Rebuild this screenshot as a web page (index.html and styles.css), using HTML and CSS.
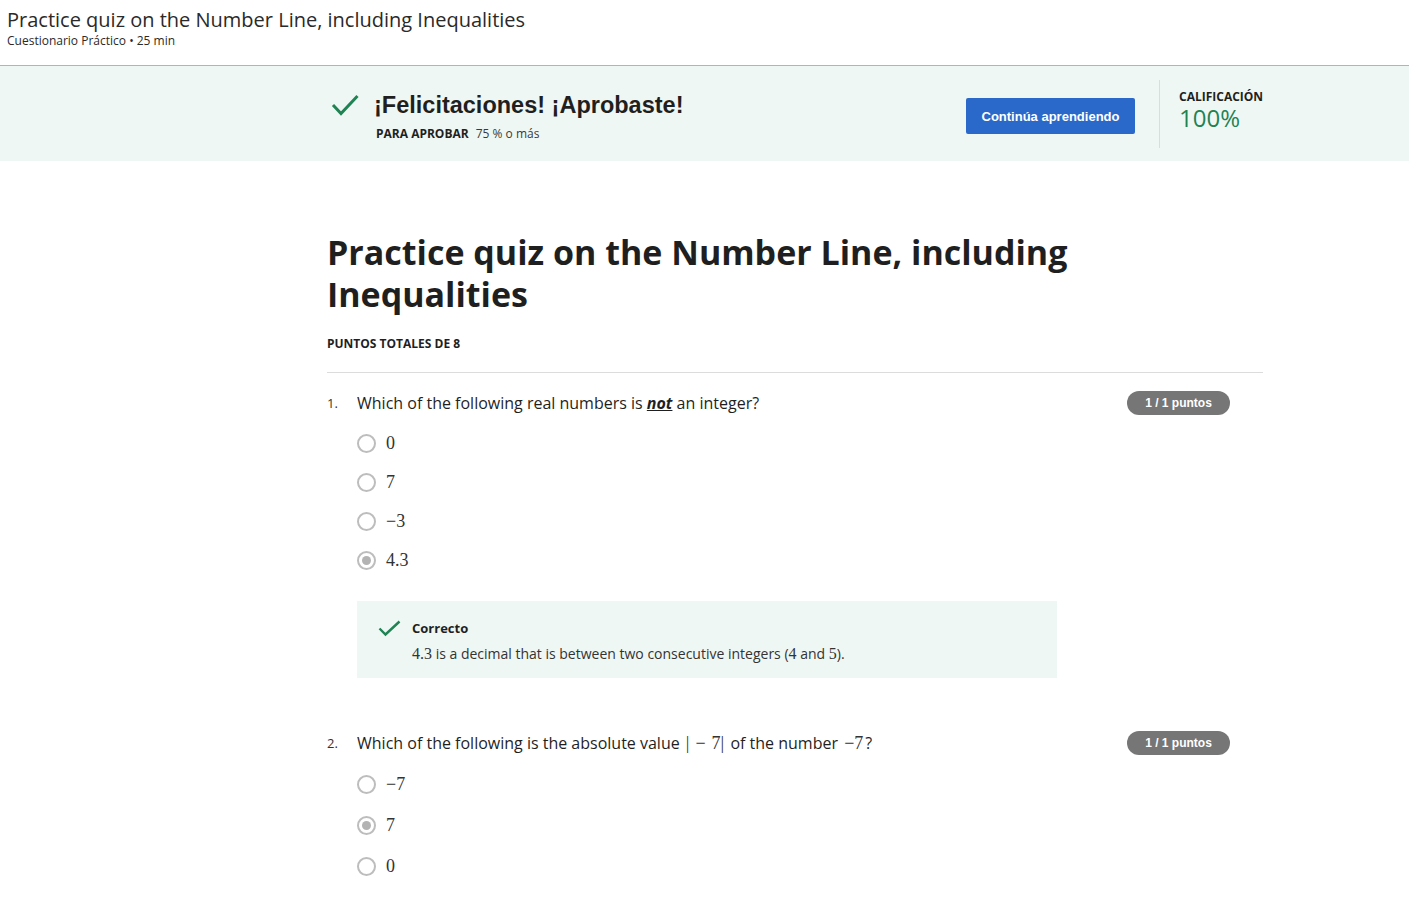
FILE: index.html
```html
<!DOCTYPE html>
<html lang="es">
<head>
<meta charset="utf-8">
<title>Practice quiz on the Number Line, including Inequalities</title>
<link rel="stylesheet" href="styles.css">
</head>
<body>
<header class="top">
  <div class="top-title">Practice quiz on the Number Line, including Inequalities</div>
  <div class="top-sub">Cuestionario Práctico • 25 min</div>
</header>

<section class="banner">
  <div class="banner-inner">
    <div class="pass">
      <svg class="pass-icon" width="28" height="24" viewBox="0 0 28 24" aria-hidden="true">
        <polyline points="2,12 10,20.5 26.5,3" fill="none" stroke="#1f8354" stroke-width="3"/>
      </svg>
      <div class="pass-text">
        <div class="pass-head">¡Felicitaciones! ¡Aprobaste!</div>
        <div class="pass-req"><span class="req-label">PARA APROBAR</span><span class="req-val">75 % o más</span></div>
      </div>
    </div>
    <button class="btn-primary">Continúa aprendiendo</button>
    <div class="vdiv"></div>
    <div class="grade">
      <div class="grade-label">CALIFICACIÓN</div>
      <div class="grade-val">100%</div>
    </div>
  </div>
</section>

<main class="content">
  <h1 class="quiz-title">Practice quiz on the Number Line, including Inequalities</h1>
  <div class="total">PUNTOS TOTALES DE 8</div>
  <hr class="divider">

  <div class="question q1">
    <div class="q-row">
      <div class="q-num">1.</div>
      <div class="q-text">Which of the following real numbers is <span class="emph">not</span> an integer?</div>
      <div class="badge">1 / 1 puntos</div>
    </div>
    <div class="options">
      <div class="opt"><span class="radio"></span><span class="math">0</span></div>
      <div class="opt"><span class="radio"></span><span class="math">7</span></div>
      <div class="opt"><span class="radio"></span><span class="math">−3</span></div>
      <div class="opt"><span class="radio checked"></span><span class="math">4.3</span></div>
    </div>
    <div class="feedback">
      <svg class="fb-icon" width="23" height="17" viewBox="0 0 23 17" aria-hidden="true">
        <polyline points="1.5,8.5 7.5,14.5 21.5,1.5" fill="none" stroke="#1f8354" stroke-width="2.4"/>
      </svg>
      <div class="fb-body">
        <div class="fb-title">Correcto</div>
        <div class="fb-text"><span class="math-s">4.3</span> is a decimal that is between two consecutive integers (<span class="math-s">4</span> and <span class="math-s">5</span>).</div>
      </div>
    </div>
  </div>

  <div class="question q2">
    <div class="q-row">
      <div class="q-num">2.</div>
      <div class="q-text">Which of the following is the absolute value <span class="math-q">|&#8196;−&#8196;7|</span> of the number <span class="math-q">−7</span>?</div>
      <div class="badge">1 / 1 puntos</div>
    </div>
    <div class="options wide">
      <div class="opt"><span class="radio"></span><span class="math">−7</span></div>
      <div class="opt"><span class="radio checked"></span><span class="math">7</span></div>
      <div class="opt"><span class="radio"></span><span class="math">0</span></div>
    </div>
  </div>
</main>
</body>
</html>
```

FILE: styles.css
```css
* { box-sizing: border-box; }

body {
  margin: 0;
  font-family: "Open Sans", "Noto Sans", sans-serif;
  color: #1f1f1f;
  background: #fff;
}

.top {
  padding: 7px 7px 16px;
  border-bottom: 1px solid #b3b3b3;
}
.top-title {
  font-size: 20px;
  line-height: 26px;
  color: #2a2a2a;
}
.top-sub {
  font-size: 12px;
  line-height: 16px;
  color: #2a2a2a;
}

.banner {
  background: #eff7f4;
  padding: 14px 0 13px;
}
.banner-inner {
  margin-left: 327px;
  width: 936px;
  display: flex;
  align-items: center;
}
.pass {
  flex: 1;
  display: flex;
  align-items: flex-start;
  align-self: flex-start;
  padding-top: 11px;
}
.pass-icon {
  margin: 2px 15px 0 4px;
  flex: none;
}
.pass-head {
  font-family: "Liberation Sans", Arial, sans-serif;
  font-weight: 700;
  font-size: 23.5px;
  line-height: 28px;
  color: #1f1f1f;
}
.pass-req {
  margin-top: 7px;
  font-size: 12px;
  line-height: 16px;
  margin-left: 2px;
}
.req-label {
  font-weight: 700;
  margin-right: 7px;
}
.req-val { color: #3a3a3a; }

.btn-primary {
  margin-top: 4px;
  margin-left: 1px;
  width: 169px;
  height: 36px;
  border: none;
  border-radius: 2px;
  background: #2a69c9;
  color: #fff;
  font-family: "Liberation Sans", Arial, sans-serif;
  font-weight: 700;
  font-size: 13px;
  padding: 0;
}
.vdiv {
  align-self: stretch;
  width: 1px;
  height: 68px;
  background: #d9dedc;
  margin-left: 24px;
}
.grade {
  align-self: flex-start;
  padding: 10px 0 0 19px;
  width: 103px;
}
.grade-label {
  font-size: 12px;
  line-height: 14px;
  font-weight: 700;
  color: #1f1f1f;
}
.grade-val {
  margin-top: 0;
  font-size: 24px;
  line-height: 28px;
  color: #1f8354;
}

.content {
  margin-left: 327px;
  width: 936px;
  padding-bottom: 40px;
}
.quiz-title {
  margin: 70px 0 0;
  max-width: 880px;
  font-size: 34px;
  line-height: 42px;
  font-weight: 700;
  color: #1f1f1f;
}
.total {
  margin-top: 21px;
  font-size: 12px;
  line-height: 16px;
  font-weight: 700;
}
.divider {
  margin: 20px 0 0;
  border: none;
  border-top: 1px solid #dcdcdc;
}

.question { margin-top: 18px; }
.q2 { margin-top: 53px; }

.q-row {
  display: flex;
  align-items: center;
}
.q-num {
  width: 30px;
  font-size: 13px;
  line-height: 24px;
  color: #333;
}
.q-text {
  flex: 1;
  font-size: 16px;
  line-height: 24px;
  color: #1f1f1f;
}
.emph {
  font-weight: 700;
  font-style: italic;
  text-decoration: underline;
}
.math-q {
  font-family: "Liberation Serif", "DejaVu Serif", serif;
  font-size: 18px;
  color: #333;
  margin: 0 2px;
}
.badge {
  margin-right: 33px;
  width: 103px;
  height: 24px;
  border-radius: 12px;
  background: #767676;
  color: #fff;
  font-family: "Liberation Sans", Arial, sans-serif;
  font-weight: 700;
  font-size: 12px;
  line-height: 24px;
  text-align: center;
}

.options {
  margin: 9px 0 0 30px;
}
.opt {
  height: 39px;
  display: flex;
  align-items: center;
}
.wide { margin-top: 9px; }
.wide .opt { height: 41px; }
.radio {
  width: 19px;
  height: 19px;
  border-radius: 50%;
  border: 2px solid #bdbdbd;
  margin-right: 10px;
  flex: none;
  display: flex;
  align-items: center;
  justify-content: center;
}
.radio.checked::after {
  content: "";
  width: 9px;
  height: 9px;
  border-radius: 50%;
  background: #b3b3b3;
}
.math {
  font-family: "Liberation Serif", "DejaVu Serif", serif;
  font-size: 18px;
  color: #333;
}
.math-s {
  font-family: "Liberation Serif", "DejaVu Serif", serif;
  font-size: 16px;
}

.feedback {
  margin: 21px 0 0 30px;
  width: 700px;
  background: #eff7f4;
  padding: 18px 21px 14px;
  display: flex;
  align-items: flex-start;
}
.fb-icon {
  flex: none;
  margin: 1px 11px 0 0;
}
.fb-title {
  font-size: 13px;
  line-height: 18px;
  font-weight: 700;
}
.fb-text {
  margin-top: 7px;
  font-size: 14px;
  line-height: 20px;
  color: #333;
}
```
